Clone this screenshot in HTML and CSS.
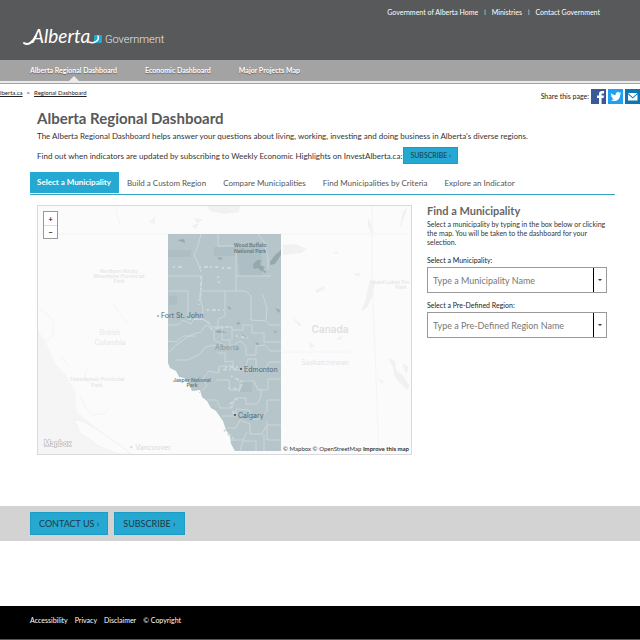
FILE: index.html
```html
<!DOCTYPE html>
<html lang="en">
<head>
<meta charset="utf-8">
<meta name="viewport" content="width=device-width, initial-scale=1">
<title>Alberta Regional Dashboard</title>
<link rel="stylesheet" href="styles.css">
</head>
<body>
<header class="masthead">
  <nav class="gov-links" aria-label="Government">
    <a href="#">Government of Alberta Home</a><span class="bar">|</span><a href="#">Ministries</a><span class="bar">|</span><a href="#">Contact Government</a>
  </nav>
  <a class="brand" href="#">
    <svg class="logo" width="146" height="28" viewBox="0 0 146 28" aria-label="Alberta Government">
      <path d="M1 25C5 28 10 24 13 18" fill="none" stroke="#fff" stroke-width="2" stroke-linecap="round"/>
      <rect x="71" y="17" width="8" height="8" rx="1" fill="#25a5cf"/>
      <path d="M66 24C70 26 77 23 75 18" fill="none" stroke="#fff" stroke-width="1.500" stroke-linecap="round"/>
      <text class="logo-script" x="9" y="25">Alberta</text>
      <text class="logo-gov" x="82" y="25">Government</text>
    </svg>
  </a>
</header>
<nav class="main-nav" aria-label="Main">
  <a class="current" href="#">Alberta Regional Dashboard</a>
  <a href="#">Economic Dashboard</a>
  <a href="#">Major Projects Map</a>
</nav>
<div class="utility">
  <nav class="crumbs" aria-label="Breadcrumb"><a href="#">Alberta.ca</a><span>&gt;</span><a href="#">Regional Dashboard</a></nav>
  <div class="share">
    <span>Share this page:</span>
    <a class="fb" href="#" aria-label="Facebook"><svg viewBox="0 0 15 15"><path fill="#fff" d="M8 15V9H6V6.500H8V5C8 2.800 9.200 2 11 2H13V4.400H11.600C10.900 4.400 10.600 4.700 10.600 5.400V6.500H13L12.600 9H10.600V15Z"/></svg></a>
    <a class="tw" href="#" aria-label="Twitter"><svg viewBox="0 0 15 15"><path fill="#fff" d="M3 4C4.200 5.400 5.800 6.200 7.600 6.200C7.200 4.300 8.500 3 10 3C10.800 3 11.300 3.300 11.700 3.700L13 3.200L12.200 4.500L13.200 4.300L12.200 5.400C12.300 9 9.800 12 6.300 12C4.900 12 3.700 11.700 2.700 11C4 11.100 5 10.700 5.800 10.100C4.800 10 4.200 9.400 3.900 8.600H4.800C3.700 8.200 3 7.400 3 6.400L3.900 6.600C3 5.900 2.700 5 3 4Z"/></svg></a>
    <a class="em" href="#" aria-label="Email"><svg viewBox="0 0 15 15"><path fill="#fff" d="M3 4H12.500L7.750 8.200ZM3 5.300L7.750 9.500L12.500 5.300V11.500H3Z"/></svg></a>
  </div>
</div>
<main>
  <div class="intro">
    <h1>Alberta Regional Dashboard</h1>
    <p>The Alberta Regional Dashboard helps answer your questions about living, working, investing and doing business in Alberta's diverse regions.</p>
    <div class="updates"><span>Find out when indicators are updated by subscribing to Weekly Economic Highlights on InvestAlberta.ca:</span><a class="button small" href="#">SUBSCRIBE ›</a></div>
  </div>
  <nav class="tabs" aria-label="Dashboard views">
    <a class="active" href="#">Select a Municipality</a>
    <a href="#">Build a Custom Region</a>
    <a href="#">Compare Municipalities</a>
    <a href="#">Find Municipalities by Criteria</a>
    <a href="#">Explore an Indicator</a>
  </nav>
  <div class="columns">
    <section class="map" aria-label="Map of Alberta">
      <svg class="map-art" viewBox="38 206 373 248" preserveAspectRatio="xMidYMid slice">
        <rect x="38" y="206" width="373" height="248" fill="#fbfbfb"/>
        <path fill="#f5f5f5" d="M38 330L46 343L56 365L65 374L75 390L77 412L88 421L111 440L130 454H38Z"/>
        <path fill="#fbfbfb" stroke="#f1f1f1" d="M74 419L83 421L104 434L125 449L131 454H118L98 446L80 433Z"/>
        <g fill="#f1f1f1">
          <path d="M207 206H240L239 212L225 214L210 211Z"/>
          <path d="M283 245L295 244L307 249L301 253L283 255Z"/>
          <path d="M370 279L375 283L372 297L367 308L361 311L365 302Z"/>
          <path d="M369 219L374 233H371L367 224Z"/>
          <path d="M403 212L408 207L402 223L399 229Z"/>
          <path d="M315 290L324 286L325 289L317 293ZM353 274L360 273L359 277ZM336 339L343 335L341 340ZM292 317L302 325L299 326ZM333 253L339 251L337 254ZM191 226L199 223L196 229ZM194 218L204 220L197 223ZM149 222L155 217L155 224ZM309 342L315 346L310 348Z"/>
          <path d="M388 358L395 361L396 370L403 376L410 386L407 390L399 382L394 375L393 367ZM378 378L384 382L382 384ZM402 363L409 367L406 374Z"/>
        </g>
        <path fill="none" stroke="#f4f4f4" d="M38 234H411M372 206V270L375 352L379 454M283 352H350M39 308L48 315L54 323L52 337L43 343M111 301L117 309L127 323M115 206L120 226M62 357L68 366M88 366L84 378L92 384M80 395L85 408L93 415L104 414L111 406"/>
        <path fill="#b5c5ca" d="M168 234H281V451H235L231 444L230 436L226 430L223 421L216 411L211 408L207 401L202 397L200 390L192 391L188 382L184 378L179 377L176 371L170 368L168 363Z"/>
        <g fill="#adbec4"><path d="M168 250H191V257H168ZM214 247H236V256H214ZM236 246H262V276H240ZM169 296L177 295V305H169ZM240 380H252V392H240Z"/></g>
        <g fill="#95a8ae"><path d="M177 240L184 239L185 243ZM217 257L223 258L220 260ZM253 264L258 260L261 260L260 265L265 267L262 272L258 268L254 269ZM270 262L275 255L281 250V255L275 264L270 265ZM262 269L267 272L264 273ZM275 308L280 310L279 313ZM227 306L231 308L230 310ZM236 323L240 322L239 325ZM255 342L260 344L257 345ZM274 330L277 332L275 333ZM242 334L246 337L244 338ZM215 331L222 330L226 333H218Z"/></g>
        <g fill="none" stroke="#cbd7da" stroke-width="1">
          <path d="M201 234L198 246L194 255L198 263L201 272M218 234V246H236M236 250V291M236 276H271M168 276H202L201 286L200 298L203 309L202 319L210 323M168 291H188V320M201 291H246L251 296V320L266 321L270 325H281M225 291V316L218 319V327H232V340M258 234L264 242L268 258L268 270M263 295L267 309L266 320"/>
          <path d="M168 325H178L183 320L191 324L194 319L205 320L212 327H222M169 352L176 345L183 340L193 334L201 332L206 325L214 330V340L225 345M175 360L188 360L200 354L205 347L216 345M168 341L176 342L183 336H195M222 326V340H230V347L240 341L246 346V355H256V346L265 345L270 351H281M232 330H243V325H252V333H264V342H281M217 353H225V362L233 361V370H245L248 359H256V368L265 370L269 362H281M199 393L207 386L203 379L209 371L219 373V366H233M216 380H229L230 390H240V381H254L258 390H268V379H281M207 400L217 400L220 408H232L235 398H246V404H257L261 397V388M222 416H236V409L250 410V419H261L267 411V400H281M227 428H236L240 420L250 424V434H262L267 425H281M231 440H243L247 432M240 451L243 441H256V451M264 434V451M267 421V440H281"/>
        </g>
        <g fill="none" stroke="#cbd7da" stroke-width="2" stroke-dasharray="2 3 4 2">
          <path d="M173 267H184M199 267H218M222 268H233M201 277V292L199 305M218 276L219 283M207 310H224M189 319H202M210 329L228 327M225 367H240M218 370L237 369M231 376L243 382L238 392M228 388L240 389M237 399L230 404L234 414M236 336L248 338M224 430L235 440"/>
        </g>
        <g class="place faint">
          <text x="119" y="273">Northern Rocky</text><text x="119" y="278">Mountains Provincial</text><text x="119" y="283">Park</text>
          <text x="97" y="381">Tweedsmuir Provincial</text><text x="97" y="387">Park</text>
          <text x="390" y="284">chard Lakes Pro</text><text x="401" y="289">Park</text>
        </g>
        <g class="region faint"><text x="110" y="335">British</text><text x="110" y="345">Columbia</text><text x="325" y="365">Saskatchewan</text></g>
        <g class="region coast"><text x="150" y="450">• Vancouver</text></g>
        <text class="country" x="330" y="333">Canada</text>
        <g class="place dark"><text x="250" y="247">Wood Buffalo</text><text x="250" y="253">National Park</text><text x="192" y="382">Jasper National</text><text x="192" y="387">Park</text></g>
        <text class="province" x="227" y="350">Alberta</text>
        <g class="city"><text x="161" y="318">Fort St. John</text><text x="244" y="372">Edmonton</text><text x="238" y="418">Calgary</text></g>
        <circle cx="158" cy="316" r="1" fill="#aaa"/><circle cx="241" cy="369" r="1" fill="#34464d"/><circle cx="235" cy="415" r="1" fill="#34464d"/>
        <text class="mapbox" x="44" y="446">Mapbox</text>
      </svg>
      <div class="zoom"><button type="button" aria-label="Zoom in">+</button><button type="button" aria-label="Zoom out">−</button></div>
      <div class="credit"><a href="#">© Mapbox</a> <a href="#">© OpenStreetMap</a> <a class="improve" href="#">Improve this map</a></div>
    </section>
    <section class="finder">
      <h2>Find a Municipality</h2>
      <p>Select a municipality by typing in the box below or clicking the map. You will be taken to the dashboard for your selection.</p>
      <label for="municipality">Select a Municipality:</label>
      <div class="combo"><input id="municipality" type="text" placeholder="Type a Municipality Name"><button type="button" aria-label="Show municipalities"></button></div>
      <label for="region">Select a Pre-Defined Region:</label>
      <div class="combo"><input id="region" type="text" placeholder="Type a Pre-Defined Region Name"><button type="button" aria-label="Show regions"></button></div>
    </section>
  </div>
</main>
<div class="actions"><a class="button" href="#">CONTACT US ›</a><a class="button" href="#">SUBSCRIBE ›</a></div>
<footer><a href="#">Accessibility</a><a href="#">Privacy</a><a href="#">Disclaimer</a><a href="#">© Copyright</a></footer>
</body>
</html>
```
FILE: styles.css
```css
* { box-sizing: border-box; }
body {
  margin: 0;
  font-family: Lato, "Liberation Sans", sans-serif;
  font-size: 7px;
  line-height: 12px;
  color: #333;
  background: #fff;
  overflow-x: hidden;
}
a { color: inherit; text-decoration: none; }
h1, h2, p { margin: 0; }
button, input { font-family: inherit; border-radius: 0; }

.masthead { height: 60px; padding: 6px 40px 0 23px; background: #58595b; color: #fff; }
.gov-links { display: flex; justify-content: flex-end; }
.gov-links .bar { padding: 0 6px; font-size: 6px; }
.brand { display: block; }
.logo { display: block; }
.logo-script { font-size: 19px; font-style: italic; font-weight: 400; fill: #fff; }
.logo-gov { font-family: Roboto, sans-serif; font-size: 11px; font-weight: 300; fill: #e8e8e8; }

.main-nav {
  display: flex;
  gap: 28px;
  height: 24px;
  padding: 0 30px;
  background: #a3a3a3;
  border-bottom: 1px solid #a3a3a3;
  box-shadow: inset 0 -2px #ebebeb;
  color: #fff;
  font-weight: 700;
  line-height: 20px;
}
.main-nav a { text-shadow: 0 1px 1px #666; }
.main-nav .current { position: relative; }
.main-nav .current::after {
  content: "";
  position: absolute;
  left: 50%;
  bottom: 2px;
  margin-left: -5px;
  border: 5px solid transparent;
  border-top: 0;
  border-bottom-color: #ebebeb;
}

.utility { display: flex; justify-content: space-between; height: 24px; padding-top: 3px; }
.crumbs { display: flex; gap: 4px; margin-left: -4px; font-size: 6px; color: #222; }
.crumbs a { text-decoration: underline; }
.share { display: flex; align-items: center; gap: 2px; height: 18px; color: #222; }
.share a { width: 15px; height: 15px; }
.share svg { display: block; }
.fb { background: #3b5998; }
.tw { background: #1da1f2; }
.em { background: #0e76b4; }

main { padding: 0 25px 0 30px; }
.intro { padding-left: 7px; font-size: 8px; }
h1 { font-size: 15px; line-height: 20px; color: #58595b; }
.intro p { padding-top: 2px; }
.updates { display: flex; align-items: center; gap: 1px; margin-top: 5px; }
.button {
  display: block;
  padding: 0 8px;
  border: 1px solid #1d9cc4;
  background: #25a9d2;
  color: #203840;
  font-size: 9px;
  line-height: 21px;
}
.button.small { padding: 0 6px; font-size: 7px; line-height: 15px; }

.tabs { display: flex; gap: 17px; margin-top: 8px; border-bottom: 1px solid #3ba0bd; color: #555; font-size: 8px; line-height: 22px; }
.tabs a { height: 22px; }
.tabs .active { height: 21px; margin: 0 -9px 1px 0; padding: 0 8px 0 7px; background: #25a9d2; color: #fff; font-weight: 700; line-height: 20px; }

.columns {
  display: grid;
  grid-template-columns: minmax(0, 25fr) minmax(0, 12fr);
  gap: 15px;
  align-items: start;
  padding: 10px 8px 0 7px;
}
.map { position: relative; border: 1px solid #d9d9d9; }
.map-art { display: block; width: 100%; }
.map-art text { font-family: Inter, sans-serif; }
.map-art .place { font-size: 5px; font-weight: 600; text-anchor: middle; }
.map-art .dark { fill: #647980; }
.map-art .faint { fill: #e6e6e6; }
.map-art .coast { fill: #dadada; }
.map-art .region { font-size: 7px; text-anchor: middle; }
.map-art .country { font-size: 10px; font-weight: 600; fill: #e0e0e0; text-anchor: middle; }
.map-art .province { font-size: 7px; fill: #879ba2; text-anchor: middle; }
.map-art .city { font-size: 7px; fill: #53666d; }
.map-art .mapbox { font-size: 7px; font-weight: 600; fill: #fff; stroke: #aaa; stroke-width: 1; paint-order: stroke; }
.zoom { position: absolute; left: 5px; top: 5px; border: 1px solid #999; background: #fff; }
.zoom button {
  display: block;
  width: 13px;
  height: 13px;
  padding: 0;
  border: 0;
  background: #fff;
  color: #222;
  font-size: 8px;
  font-weight: 700;
  line-height: 12px;
}
.zoom button + button { border-top: 1px solid #ddd; }
.credit { position: absolute; right: 0; bottom: 0; padding: 0 2px; color: #333; font-size: 6px; line-height: 10px; }
.improve { font-weight: 700; }

.finder h2 { font-size: 11px; line-height: 12px; color: #666; }
.finder p { margin: 3px 0 8px; line-height: 9px; }
.finder label { display: block; line-height: 10px; color: #222; }
.combo { display: flex; margin: 2px 0 7px; border: 1px solid #999; }
.combo input { flex: 1; min-width: 0; height: 24px; padding: 0 5px; border: 0; font-size: 9px; color: #333; }
.combo input::placeholder { color: #777; opacity: 1; }
.combo button { display: grid; place-items: center; width: 13px; padding: 0; border: 0; border-left: 1px solid #000; background: #fff; }
.combo button::after { content: ""; border: 2px solid transparent; border-top-color: #333; border-bottom: 0; }

.actions { display: flex; gap: 6px; margin-top: 51px; padding: 6px 30px; background: #d3d3d3; }
footer {
  display: flex;
  gap: 7px;
  margin-top: 65px;
  padding: 8px 30px 13px;
  border-bottom: 1px solid #555;
  background: #000;
  color: #fff;
}
```
